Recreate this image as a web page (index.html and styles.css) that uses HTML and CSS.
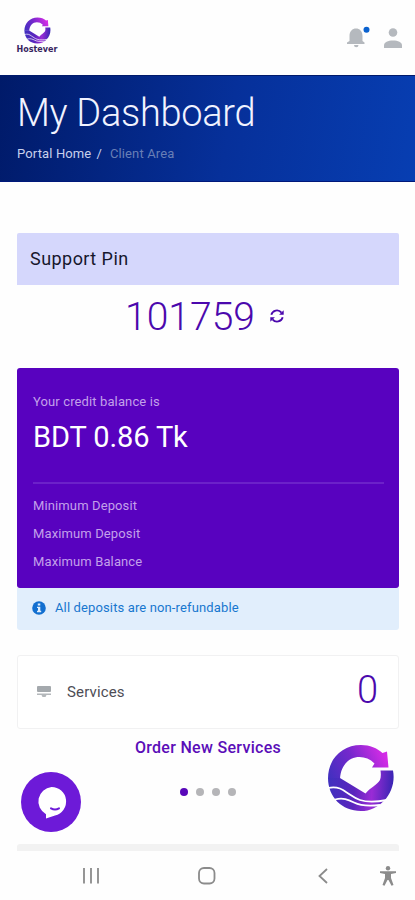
FILE: index.html
```html
<!DOCTYPE html>
<html lang="en">
<head>
  <meta charset="UTF-8">
  <meta name="viewport" content="width=device-width, initial-scale=1.0">
  <title>Hostever - My Dashboard</title>
  <link rel="stylesheet" href="styles.css">
</head>
<body>
  <!-- Shared logo mark -->
  <svg class="defs" width="0" height="0" aria-hidden="true">
    <defs>
      <linearGradient id="ring" gradientUnits="userSpaceOnUse" x1="4" y1="40" x2="58" y2="12">
        <stop offset="0" stop-color="#4030bf" />
        <stop offset="0.5" stop-color="#7428cc" />
        <stop offset="1" stop-color="#d42ce6" />
      </linearGradient>
      <linearGradient id="base" gradientUnits="userSpaceOnUse" x1="2" y1="34" x2="66" y2="38">
        <stop offset="0" stop-color="#4030bf" />
        <stop offset="0.4" stop-color="#5a25bd" />
        <stop offset="0.68" stop-color="#9a2bd6" />
        <stop offset="1" stop-color="#3a25b4" />
      </linearGradient>
      <symbol id="mark" viewBox="0 0 68 68">
        <path fill="url(#ring)" d="M1 34.500C1 15 15 1 34 1c9 0 16 3 21.500 8L60 7.500l1.500 16L45 23.500l2.500-4C43 15 38 13 32.500 13 22 13 14 21 13 34.500z" />
        <path fill="url(#base)" d="M1 34h12l25.500 15.500C44 43 50 41 53 36c1-3 1-6 .5-9.500H66C70 47 54 67 34 67 15 67 1 53 1 34z" />
        <path class="wave" d="M1 44c8-2 13 0 18 4 5 3 8 6 14 8 8 2.500 16 2 27 0" />
        <path class="wave" d="M8 55.500c8-2 13 0 19 3s14 4 26 2.500" />
      </symbol>
    </defs>
  </svg>

  <div class="page">
    <!-- Top bar -->
    <header class="topbar">
      <div class="brand">
        <svg class="brand-mark" width="27" height="27"><use href="#mark" /></svg>
        <span class="brand-name">Hostever</span>
      </div>
      <div class="topbar-icons">
        <svg width="24" height="24" viewBox="0 0 24 24">
          <path fill="#b5b9be" d="M3.500 15V10c0-5 3-7.500 6.500-7.500s6.500 2.500 6.500 7.500v5l2 1.500V18H1v-1.500zM8 19h4.500a2.200 2.200 0 0 1-4.500 0z" />
          <circle cx="20.500" cy="3.800" r="3" fill="#0b62cf" />
        </svg>
        <svg width="20" height="22" viewBox="0 0 20 22">
          <circle cx="10" cy="6.500" r="4.300" fill="#b5b9be" />
          <path fill="#b5b9be" d="M1 22v-2.500C1 16 5 14.500 10 14.500s9 1.500 9 5V22z" />
        </svg>
      </div>
    </header>

    <!-- Banner -->
    <section class="banner">
      <h1>My Dashboard</h1>
      <nav class="breadcrumb">
        <a>Portal Home</a><span class="sep">/</span><span class="current">Client Area</span>
      </nav>
    </section>

    <main class="content">
      <section class="pin">
        <h2>Support Pin</h2>
        <div class="pin-value">
          <span>101759</span>
          <svg width="14" height="14" viewBox="0 0 14 14">
            <path class="refresh-line" d="M1.300 5.800C2.500 1 8.500 0 11.500 3.600M12.700 8.200C11.500 13 5.500 14 2.500 10.400" />
            <path fill="#4b08ad" d="M13.700 1.200v4.600H9.100zM.3 12.800V8.200h4.600z" />
          </svg>
        </div>
      </section>

      <!-- Credit balance -->
      <section class="credit">
        <div class="credit-card">
          <p class="credit-label">Your credit balance is</p>
          <p class="credit-amount">BDT 0.86 Tk</p>
          <ul class="limits">
            <li>Minimum Deposit</li>
            <li>Maximum Deposit</li>
            <li>Maximum Balance</li>
          </ul>
        </div>
        <div class="notice">
          <svg width="14" height="14" viewBox="0 0 14 14">
            <circle cx="7" cy="7" r="6.800" fill="#126fd0" />
            <path fill="#e1eefc" d="M5.800 2.500h2.500v2H5.800zM5 5.700h3.300v4h.9v1.500H5V9.700h1V7.100H5z" />
          </svg>
          <span>All deposits are non-refundable</span>
        </div>
      </section>

      <!-- Services slider -->
      <section class="services">
        <div class="service-card">
          <svg width="14" height="12" viewBox="0 0 14 12">
            <rect width="14" height="6" rx="1" fill="#a4a9ad" />
            <path fill="#b4b8bb" d="M0 7.500h14V9H9.500L8.500 11h-3l-1-2H0z" />
          </svg>
          <span class="service-name">Services</span>
          <span class="service-count">0</span>
        </div>
        <a class="order-link">Order New Services</a>
        <div class="dots">
          <i class="active"></i><i></i><i></i><i></i>
        </div>
      </section>
      <div class="next-card"></div>
    </main>

    <!-- Phone navigation -->
    <footer class="navbar">
      <svg width="16" height="16" viewBox="0 0 16 16"><path class="nav-line" d="M1 0v15.500M8 0v15.500M15 0v15.500" /></svg>
      <svg width="18" height="18" viewBox="0 0 18 18"><rect class="nav-line" x="1" y="1" width="15.500" height="15.500" rx="5" /></svg>
      <svg width="10" height="16" viewBox="0 0 10 16"><path class="nav-line" d="M9 1L1.500 8 9 15" /></svg>
      <svg width="16" height="20" viewBox="0 0 16 20">
        <circle cx="8" cy="2.200" r="2.200" fill="#8b8b8b" />
        <path fill="#8b8b8b" d="M0 5.200h16v1.900l-5 .9v4l2.500 7-2 .7L8.500 14h-1l-3 5.700-2-.7L5 12V8L0 7.100z" />
      </svg>
    </footer>

    <!-- Floating buttons -->
    <div class="chat">
      <svg width="60" height="60" viewBox="0 0 60 60">
        <circle cx="30" cy="30" r="30" fill="#6d1ad8" />
        <path fill="#fff" d="M30.500 15a14.500 14.500 0 0 1 3.500 28.600L25 46.500v-4.300A14.500 14.500 0 0 1 30.500 15z" />
        <path class="smile" d="M30 36.300c2.500 1.500 5.500 1.500 8 0" />
      </svg>
    </div>
    <svg class="float-mark" width="68" height="68"><use href="#mark" /></svg>
  </div>
</body>
</html>
```
FILE: styles.css
```css
/* General Styles */
* {
  box-sizing: border-box;
}

body {
  margin: 0;
  font-family: Roboto, 'Liberation Sans', sans-serif;
  background: #fefefe;
  color: #4d4d55;
}

h1, h2, p, ul {
  margin: 0;
  padding: 0;
  font-weight: 400;
}

svg {
  display: block;
  flex-shrink: 0;
}

.defs {
  position: absolute;
}

.page {
  position: relative;
  display: flex;
  flex-direction: column;
  height: 900px;
  overflow: hidden;
}

/* Top bar */
.topbar {
  display: flex;
  justify-content: space-between;
  height: 75px;
  padding: 17px 12px 0 16px;
}

.brand {
  display: flex;
  flex-direction: column;
  align-items: center;
  width: 42px;
}

.brand-name {
  margin-top: 1px;
  font-family: 'DejaVu Sans', sans-serif;
  font-size: 8px;
  line-height: 10px;
  font-weight: bold;
  color: #37265f;
}

.topbar-icons {
  display: flex;
  gap: 13px;
  padding-top: 9px;
}

.wave {
  fill: none;
  stroke: #fff;
  stroke-width: 1.8;
}

/* Banner */
.banner {
  height: 107px;
  padding: 13px 17px 0;
  background: linear-gradient(100deg, #001a69, #06309a 55%, #073eb2);
  border-top: 1px solid #001a6b;
  border-bottom: 1px solid #00187a;
}

.banner h1 {
  font-size: 38px;
  line-height: 48px;
  font-weight: 300;
  letter-spacing: -0.3px;
  color: #f1f3ff;
}

.breadcrumb {
  display: flex;
  margin-top: 8px;
  font-size: 13px;
  line-height: 18px;
  letter-spacing: 0.13px;
  color: #c8d0ec;
}

.breadcrumb .sep {
  margin: 0 8px 0 5px;
}

.breadcrumb .current {
  color: #687fb6;
}

/* Content */
.content {
  flex: 1;
  padding: 51px 16px 0 17px;
}

.pin h2 {
  height: 52px;
  padding-left: 13px;
  font-size: 18px;
  line-height: 51px;
  letter-spacing: 0.45px;
  background: #d5d7fc;
  color: #17172d;
  border-radius: 2px 2px 0 0;
}

.pin-value {
  display: flex;
  align-items: center;
  justify-content: center;
  gap: 15px;
  height: 63px;
  padding-right: 7px;
  font-size: 39px;
  font-weight: 350;
  color: #4b08ad;
}

.pin-value svg {
  margin-top: -2px;
}

.refresh-line {
  fill: none;
  stroke: #4b08ad;
  stroke-width: 1.8;
}

/* Credit balance */
.credit {
  margin-top: 20px;
}

.credit-card {
  height: 220px;
  padding: 24px 15px 0 16px;
  background: #5802bf;
  border-radius: 3px;
  color: #c3a0ea;
  font-size: 13px;
  letter-spacing: 0.12px;
}

.credit-label {
  line-height: 20px;
}

.credit-amount {
  height: 72px;
  padding-top: 7px;
  font-size: 29px;
  line-height: 36px;
  letter-spacing: -0.1px;
  color: #fff;
  border-bottom: 2px solid #6c21c9;
}

.limits {
  padding-top: 8px;
  line-height: 28px;
  list-style: none;
}

.notice {
  display: flex;
  align-items: center;
  gap: 9px;
  height: 42px;
  padding: 0 0 3px 15px;
  font-size: 13px;
  letter-spacing: 0.13px;
  background: #e1eefc;
  color: #1877cf;
  border-radius: 0 0 3px 3px;
}

/* Services */
.services {
  margin-top: 25px;
}

.service-card {
  display: flex;
  align-items: center;
  height: 74px;
  padding: 0 20px 1px 19px;
  background: #fff;
  border: 1px solid #f1f1f2;
  border-radius: 3px;
}

.service-name {
  margin-left: 16px;
  font-size: 15px;
  letter-spacing: 0.15px;
}

.service-count {
  margin-left: auto;
  padding-bottom: 3px;
  font-size: 38px;
  font-weight: 350;
  color: #4b08ad;
}

.order-link {
  display: block;
  margin-top: 8px;
  font-size: 16px;
  line-height: 22px;
  font-weight: 500;
  letter-spacing: 0.3px;
  text-align: center;
  color: #5a0db8;
}

.dots {
  display: flex;
  justify-content: center;
  gap: 8px;
  margin-top: 29px;
}

.dots i {
  width: 8px;
  height: 8px;
  border-radius: 50%;
  background: #b5b5b8;
}

.dots .active {
  background: #5807b9;
}

.next-card {
  height: 7px;
  margin-top: 48px;
  background: #f2f2f2;
  border-radius: 3px 3px 0 0;
}

/* Phone navigation */
.navbar {
  display: flex;
  align-items: center;
  height: 48px;
  padding: 0 19px 0 83px;
}

.navbar svg:nth-child(2) {
  margin-left: 99px;
}

.navbar svg:nth-child(3) {
  margin-left: 102px;
}

.navbar svg:nth-child(4) {
  margin-left: auto;
}

.nav-line {
  fill: none;
  stroke: #8b8b8b;
  stroke-width: 1.8;
}

/* Floating buttons */
.chat {
  position: absolute;
  left: 21px;
  top: 772px;
}

.smile {
  fill: none;
  stroke: #6d1ad8;
  stroke-width: 2;
  stroke-linecap: round;
}

.float-mark {
  position: absolute;
  left: 327px;
  top: 744px;
}
```
